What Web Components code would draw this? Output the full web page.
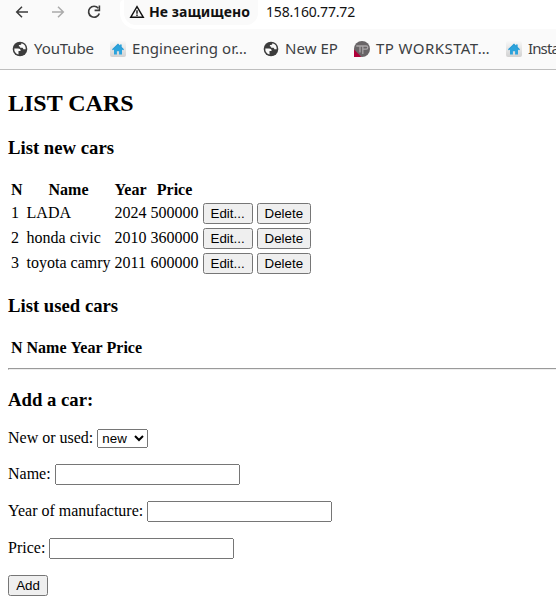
<!DOCTYPE html>
<html lang="ru">
<head>
<meta charset="utf-8">
<title>Cars</title>
<style>
body{margin:0;background:#fff;font-family:"Liberation Serif",serif;font-size:16px;color:#000;overflow:hidden}
</style>
</head>
<body>
<browser-chrome></browser-chrome>
<cars-page></cars-page>
<script>
const ICONS = {
  back:'<svg width="18" height="18" viewBox="0 0 18 18" fill="none" stroke="#3c3c3c" stroke-width="1.5"><path d="M15 9H3.8M9 3.7 3.7 9 9 14.3"/></svg>',
  forward:'<svg width="18" height="18" viewBox="0 0 18 18" fill="none" stroke="#ababab" stroke-width="1.5"><path d="M3 9h11.2M9 3.7 14.3 9 9 14.3"/></svg>',
  reload:'<svg width="18" height="18" viewBox="0 0 18 18"><path d="M13.3 5.2A5.5 5.5 0 1 0 14.3 10.5" fill="none" stroke="#3c3c3c" stroke-width="1.7"/><path d="M15.2 2.6V8.2H9.6V6.6h4V2.6z" fill="#3c3c3c"/></svg>',
  warning:'<svg width="16" height="14" viewBox="0 0 16 14"><path d="M8 1.7 14.3 12.3H1.7Z" fill="none" stroke="#111" stroke-width="1.4"/><path d="M7.3 5.2h1.4v3.6H7.3zM7.3 9.6h1.4V11H7.3z" fill="#111"/></svg>',
  globe:'<svg width="16" height="16" viewBox="0 0 16 16"><circle cx="8" cy="8" r="7.3" fill="#3c3c3c"/><path d="M2.3 7.6h3.8c1.6 0 2.5.8 2.5 2.4H6.5v3.6A5.8 5.8 0 0 1 2.3 7.6ZM9.3 2.3c.3 1-.4 1.7-1.3 1.7H6.9v1.4h1.2v1.4h1.7c1 0 1.5.6 1.5 1.5h2.4A5.9 5.9 0 0 0 9.3 2.3Z" fill="#fafafa"/></svg>',
  house:'<svg width="16" height="16" viewBox="0 0 16 16"><defs><linearGradient id="g" x2="0" y2="1"><stop stop-color="#f8f8f8"/><stop offset="1" stop-color="#d2d2d2"/></linearGradient></defs><rect width="16" height="16" rx="2" fill="url(#g)"/><path d="M8 2.4 2 8.2l1 1 1-.8V13.6h2.9v-3.3h2.2v3.3H12V8.4l1 .8 1-1-2.3-2.2V3.4H10v1Z" fill="#2ba3dc"/><path d="M2.6 8.6 8 3.5l5.4 5.1" fill="none" stroke="#2c93cc" stroke-width=".7"/></svg>',
  tp:'<svg width="16" height="16" viewBox="0 0 16 16"><circle cx="8" cy="8" r="8" fill="#696567"/><path d="M0 8.3 7.3 15.9H0Z" fill="#b0003a"/><path d="M2.3 5h6M6 5v6.5M8.8 13V5h3.4a1.6 1.6 0 0 1 0 3.2H9" fill="none" stroke="#aaa6a8" stroke-width="1.3"/></svg>'
};

class SvgIcon extends HTMLElement {
  connectedCallback(){
    this.attachShadow({mode:'open'}).innerHTML = '<style>:host{display:block;flex:none;line-height:0}svg{display:block}</style>' + ICONS[this.getAttribute('name')];
  }
}
customElements.define('svg-icon', SvgIcon);

/* Label that spreads its letters evenly over a given width. */
class FitLabel extends HTMLElement {
  connectedCallback(){
    this.attachShadow({mode:'open'}).innerHTML = '<style>:host{display:block;flex:none;white-space:nowrap}span{display:inline-block}</style><span><slot></slot></span>';
    const w = +this.getAttribute('width');
    const span = this.shadowRoot.querySelector('span');
    this.style.width = w + 'px';
    const spacing = (w - span.getBoundingClientRect().width) / this.textContent.length;
    span.style.letterSpacing = spacing + 'px';
  }
}
customElements.define('fit-label', FitLabel);

class BookmarkLink extends HTMLElement {
  connectedCallback(){
    this.attachShadow({mode:'open'}).innerHTML = `<style>
      :host{display:flex;align-items:center;gap:6px;flex:none;font:15px/20px "Noto Sans",sans-serif;color:#3c4043}
      fit-label{margin-top:-2px}
    </style><svg-icon name="${this.getAttribute('icon')}"></svg-icon><fit-label width="${this.getAttribute('width')}">${this.textContent}</fit-label>`;
  }
}
customElements.define('bookmark-link', BookmarkLink);

class BrowserChrome extends HTMLElement {
  constructor(){
    super();
    this.attachShadow({mode:'open'}).innerHTML = `<style>
      :host{display:block;box-sizing:border-box;height:70px;background:#fafafa;border-bottom:1px solid #bebebe;overflow:hidden}
      .nav{display:flex;height:29px;padding-left:13px}
      .buttons{display:flex;gap:18px;padding-top:3px;width:107px}
      .address{display:flex;flex:1;background:#fff;border-radius:4px 0 0 16px;padding-left:4px}
      .chip{display:flex;box-sizing:border-box;width:134px;height:25px;padding-left:5px;gap:4px;background:#fafafa;border-radius:0 0 12px 12px;font:bold 14px/24px "Noto Sans",sans-serif;color:#111}
      .chip svg-icon{padding-top:5px}
      .url{font:14px/24px "Noto Sans",sans-serif;color:#111;margin-left:8px}
      .marks{display:flex;height:40px;align-items:center;padding-left:12px;gap:16px}
    </style>
    <div class="nav">
      <div class="buttons"><svg-icon name="back"></svg-icon><svg-icon name="forward"></svg-icon><svg-icon name="reload"></svg-icon></div>
      <div class="address"><div class="chip"><svg-icon name="warning"></svg-icon><fit-label width="101">Не защищено</fit-label></div><fit-label class="url" width="89">158.160.77.72</fit-label></div>
    </div>
    <div class="marks">
      <bookmark-link icon="globe" width="60">YouTube</bookmark-link>
      <bookmark-link icon="house" width="115">Engineering or…</bookmark-link>
      <bookmark-link icon="globe" width="53">New EP</bookmark-link>
      <bookmark-link icon="tp" width="114">TP WORKSTAT…</bookmark-link>
      <bookmark-link icon="house" width="31">Insta</bookmark-link>
    </div>`;
  }
}
customElements.define('browser-chrome', BrowserChrome);

class CarTable extends HTMLElement {
  connectedCallback(){
    const rows = JSON.parse(this.getAttribute('rows') || '[]');
    this.attachShadow({mode:'open'}).innerHTML = `<style>
      :host{display:block}
      table{border-spacing:2px}
      td,th{padding:1px}
      button{font:13.333px "Liberation Sans",sans-serif;height:21px;display:block;box-sizing:border-box;padding:1px 6px}
      .edit{width:50px}.del{width:54px}
    </style><table><tr><th>N</th><th>Name</th><th>Year</th><th>Price</th></tr>${rows.map((r,i)=>
      `<tr><td>${i+1}</td>${r.map(c=>`<td>${c}</td>`).join('')}<td><button class="edit">Edit...</button></td><td><button class="del">Delete</button></td></tr>`).join('')}</table>`;
  }
}
customElements.define('car-table', CarTable);

class FormField extends HTMLElement {
  connectedCallback(){
    this.attachShadow({mode:'open'}).innerHTML = `<style>
      :host{display:block;margin:16px 0}
      ::slotted(input){box-sizing:border-box;width:185px;height:21px}
      ::slotted(select){box-sizing:border-box;width:51px;height:19px}
      ::slotted(*){font:13.333px "Liberation Sans",sans-serif}
    </style><slot></slot>`;
  }
}
customElements.define('form-field', FormField);

class CarsPage extends HTMLElement {
  constructor(){
    super();
    this.attachShadow({mode:'open'}).innerHTML = `<style>
      :host{display:flow-root;margin:0 -8px 0 8px}
      h2{font-size:24px;margin:19.92px 0}
      h3{font-size:18.72px;margin:18.72px 0}
      hr{margin:8px 0}
      button{font:13.333px "Liberation Sans",sans-serif;width:40px;height:21px;padding:1px 6px}
    </style>
    <h2>LIST CARS</h2>
    <h3>List new cars</h3>
    <car-table rows='[["LADA",2024,500000],["honda civic",2010,360000],["toyota camry",2011,600000]]'></car-table>
    <h3>List used cars</h3>
    <car-table></car-table>
    <hr>
    <h3>Add a car:</h3>
    <form-field>New or used: <select><option>new</option><option>used</option></select></form-field>
    <form-field>Name: <input></form-field>
    <form-field>Year of manufacture: <input></form-field>
    <form-field>Price: <input></form-field>
    <button>Add</button>`;
  }
}
customElements.define('cars-page', CarsPage);
</script>
</body>
</html>
